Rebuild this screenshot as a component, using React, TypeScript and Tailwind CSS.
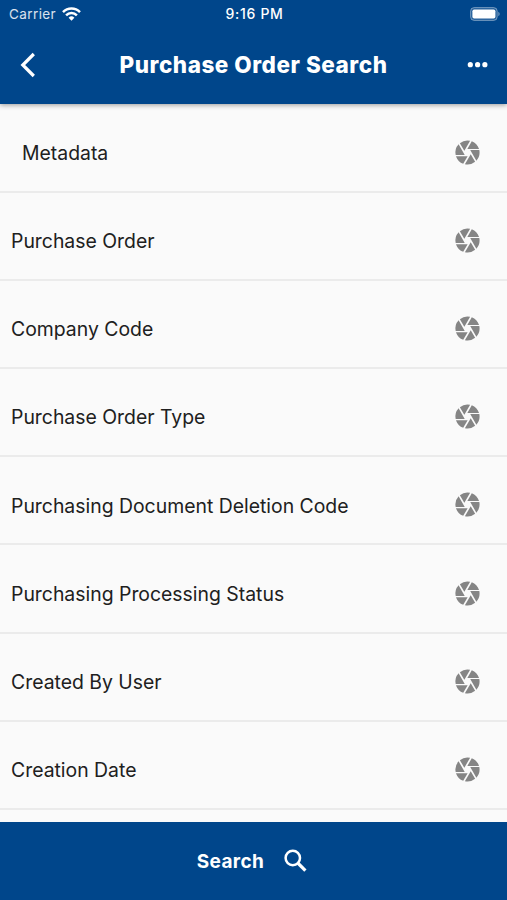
import { MdCamera } from 'react-icons/md';

const fields = [
  { label: 'Metadata', indent: true },
  { label: 'Purchase Order' },
  { label: 'Company Code' },
  { label: 'Purchase Order Type' },
  { label: 'Purchasing Document Deletion Code' },
  { label: 'Purchasing Processing Status' },
  { label: 'Created By User' },
  { label: 'Creation Date' },
];

export default function App() {
  return (
    <div className="flex h-screen flex-col overflow-hidden bg-[#fafafa] font-['Inter',sans-serif]">
      <header className="z-10 h-[103.5px] shrink-0 bg-[#00468b] text-white shadow-[0_1px_5px_rgba(0,0,0,0.4)]">
        <StatusBar />
        <div className="grid h-[73px] grid-cols-[60px_1fr_60px] items-center">
          <button className="flex pl-[15px]" aria-label="Back">
            <svg width="26" height="26" viewBox="0 0 26 26" fill="none">
              <path d="M18.8 2L7.8 13l11 11" stroke="currentColor" strokeWidth="3.2" />
            </svg>
          </button>
          <h1 className="whitespace-nowrap pt-px text-center text-[22.5px] leading-7 font-extrabold tracking-[0.53px]">
            Purchase Order Search
          </h1>
          <button className="flex justify-end pr-4" aria-label="More">
            <svg width="27" height="26" viewBox="0 0 27 26" fill="currentColor">
              <circle cx="6.3" cy="12.7" r="2.6" />
              <circle cx="13.6" cy="12.7" r="2.6" />
              <circle cx="20.9" cy="12.7" r="2.6" />
            </svg>
          </button>
        </div>
      </header>

      <main className="min-h-0 flex-1 overflow-hidden pt-px">
        {fields.map((f) => (
          <FieldRow key={f.label} label={f.label} indent={f.indent} />
        ))}
      </main>

      <button className="flex h-[78px] shrink-0 items-center justify-center bg-[#00468b] text-white">
        <span className="pt-[2px] text-[19px] font-bold tracking-[0.4px]">Search</span>
        <svg width="30" height="30" viewBox="0 0 30 30" fill="none" stroke="currentColor" className="ml-4">
          <circle cx="12.8" cy="12" r="7.2" strokeWidth="2.5" />
          <path d="M17.8 17l7.6 7.6" strokeWidth="3.2" />
        </svg>
      </button>
    </div>
  );
}

function StatusBar() {
  return (
    <div className="grid h-7 grid-cols-[1fr_auto_1fr] items-center pl-[9px] pr-[7px] text-[13.5px]">
      <div className="flex items-center gap-[6px] text-white/85">
        <span className="tracking-[0.4px]">Carrier</span>
        <svg width="19" height="14" viewBox="0 0 19 14" fill="none" stroke="white" strokeWidth="2.5">
          <path d="M1 5.1a12 12 0 0 1 17 0" />
          <path d="M4.1 8.3a7.6 7.6 0 0 1 10.8 0" />
          <path d="M9.5 13.8L6.6 10.8a4.1 4.1 0 0 1 5.8 0z" fill="white" stroke="none" />
        </svg>
      </div>
      <span className="-mt-px text-center text-[14px] font-medium tracking-[0.7px]">9:16 PM</span>
      <svg className="-mt-px justify-self-end" width="30" height="14" viewBox="0 0 30 14">
        <rect x="0.6" y="0.6" width="26.6" height="12.8" rx="3.6" fill="white" fillOpacity="0.15" stroke="white" strokeOpacity="0.4" />
        <rect x="2.4" y="2.4" width="23" height="9.2" rx="1.8" fill="white" />
        <path d="M28.4 4.8c1.6.7 1.6 3.7 0 4.4z" fill="white" fillOpacity="0.5" />
      </svg>
    </div>
  );
}

function FieldRow({ label, indent }: { label: string; indent?: boolean }) {
  return (
    <div className="flex h-[88.2px] items-center justify-between border-b-2 border-[#ebebeb] pt-[9px] pr-[25px]">
      <span className={`pt-[2.5px] text-[19.4px] text-[#202020] ${indent ? 'pl-[22px]' : 'pl-[11px]'}`}>
        {label}
      </span>
      <MdCamera size={29} className="text-[#858585]" />
    </div>
  );
}
